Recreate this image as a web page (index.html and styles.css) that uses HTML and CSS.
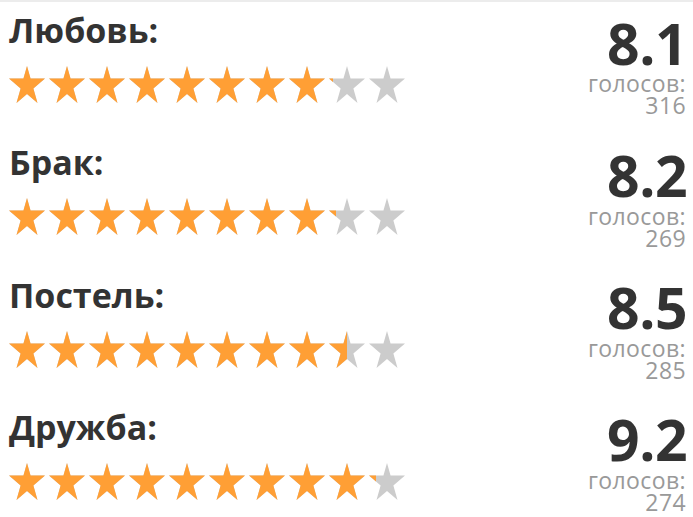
FILE: index.html
```html
<!DOCTYPE html>
<html lang="ru">
<head>
<meta charset="utf-8">
<link rel="stylesheet" href="styles.css">
</head>
<body>
<svg class="defs" width="0" height="0">
  <defs>
    <polygon id="star" points="18,0 21.55,12.5 36,12.5 24.38,22.49 28.5,37 18,27.97 7.5,37 11.62,22.49 0,12.5 14.45,12.5"/>
  </defs>
</svg>
<div class="topbar"></div>
<main class="list">
  <section class="row">
    <div class="left">
      <h2 class="label">Любовь:</h2>
      <div class="stars">
        <div class="layer gray"><svg viewBox="0 0 36 37"><use href="#star"/></svg><svg viewBox="0 0 36 37"><use href="#star"/></svg><svg viewBox="0 0 36 37"><use href="#star"/></svg><svg viewBox="0 0 36 37"><use href="#star"/></svg><svg viewBox="0 0 36 37"><use href="#star"/></svg><svg viewBox="0 0 36 37"><use href="#star"/></svg><svg viewBox="0 0 36 37"><use href="#star"/></svg><svg viewBox="0 0 36 37"><use href="#star"/></svg><svg viewBox="0 0 36 37"><use href="#star"/></svg><svg viewBox="0 0 36 37"><use href="#star"/></svg></div>
        <div class="layer fill" style="width:323.6px"><svg viewBox="0 0 36 37"><use href="#star"/></svg><svg viewBox="0 0 36 37"><use href="#star"/></svg><svg viewBox="0 0 36 37"><use href="#star"/></svg><svg viewBox="0 0 36 37"><use href="#star"/></svg><svg viewBox="0 0 36 37"><use href="#star"/></svg><svg viewBox="0 0 36 37"><use href="#star"/></svg><svg viewBox="0 0 36 37"><use href="#star"/></svg><svg viewBox="0 0 36 37"><use href="#star"/></svg><svg viewBox="0 0 36 37"><use href="#star"/></svg><svg viewBox="0 0 36 37"><use href="#star"/></svg></div>
      </div>
    </div>
    <div class="right">
      <div class="score">8.1</div>
      <div class="votes"><span class="vline">голосов:</span><span class="vline">316</span></div>
    </div>
  </section>
  <section class="row">
    <div class="left">
      <h2 class="label">Брак:</h2>
      <div class="stars">
        <div class="layer gray"><svg viewBox="0 0 36 37"><use href="#star"/></svg><svg viewBox="0 0 36 37"><use href="#star"/></svg><svg viewBox="0 0 36 37"><use href="#star"/></svg><svg viewBox="0 0 36 37"><use href="#star"/></svg><svg viewBox="0 0 36 37"><use href="#star"/></svg><svg viewBox="0 0 36 37"><use href="#star"/></svg><svg viewBox="0 0 36 37"><use href="#star"/></svg><svg viewBox="0 0 36 37"><use href="#star"/></svg><svg viewBox="0 0 36 37"><use href="#star"/></svg><svg viewBox="0 0 36 37"><use href="#star"/></svg></div>
        <div class="layer fill" style="width:327.2px"><svg viewBox="0 0 36 37"><use href="#star"/></svg><svg viewBox="0 0 36 37"><use href="#star"/></svg><svg viewBox="0 0 36 37"><use href="#star"/></svg><svg viewBox="0 0 36 37"><use href="#star"/></svg><svg viewBox="0 0 36 37"><use href="#star"/></svg><svg viewBox="0 0 36 37"><use href="#star"/></svg><svg viewBox="0 0 36 37"><use href="#star"/></svg><svg viewBox="0 0 36 37"><use href="#star"/></svg><svg viewBox="0 0 36 37"><use href="#star"/></svg><svg viewBox="0 0 36 37"><use href="#star"/></svg></div>
      </div>
    </div>
    <div class="right">
      <div class="score">8.2</div>
      <div class="votes"><span class="vline">голосов:</span><span class="vline">269</span></div>
    </div>
  </section>
  <section class="row">
    <div class="left">
      <h2 class="label">Постель:</h2>
      <div class="stars">
        <div class="layer gray"><svg viewBox="0 0 36 37"><use href="#star"/></svg><svg viewBox="0 0 36 37"><use href="#star"/></svg><svg viewBox="0 0 36 37"><use href="#star"/></svg><svg viewBox="0 0 36 37"><use href="#star"/></svg><svg viewBox="0 0 36 37"><use href="#star"/></svg><svg viewBox="0 0 36 37"><use href="#star"/></svg><svg viewBox="0 0 36 37"><use href="#star"/></svg><svg viewBox="0 0 36 37"><use href="#star"/></svg><svg viewBox="0 0 36 37"><use href="#star"/></svg><svg viewBox="0 0 36 37"><use href="#star"/></svg></div>
        <div class="layer fill" style="width:338px"><svg viewBox="0 0 36 37"><use href="#star"/></svg><svg viewBox="0 0 36 37"><use href="#star"/></svg><svg viewBox="0 0 36 37"><use href="#star"/></svg><svg viewBox="0 0 36 37"><use href="#star"/></svg><svg viewBox="0 0 36 37"><use href="#star"/></svg><svg viewBox="0 0 36 37"><use href="#star"/></svg><svg viewBox="0 0 36 37"><use href="#star"/></svg><svg viewBox="0 0 36 37"><use href="#star"/></svg><svg viewBox="0 0 36 37"><use href="#star"/></svg><svg viewBox="0 0 36 37"><use href="#star"/></svg></div>
      </div>
    </div>
    <div class="right">
      <div class="score">8.5</div>
      <div class="votes"><span class="vline">голосов:</span><span class="vline">285</span></div>
    </div>
  </section>
  <section class="row">
    <div class="left">
      <h2 class="label">Дружба:</h2>
      <div class="stars">
        <div class="layer gray"><svg viewBox="0 0 36 37"><use href="#star"/></svg><svg viewBox="0 0 36 37"><use href="#star"/></svg><svg viewBox="0 0 36 37"><use href="#star"/></svg><svg viewBox="0 0 36 37"><use href="#star"/></svg><svg viewBox="0 0 36 37"><use href="#star"/></svg><svg viewBox="0 0 36 37"><use href="#star"/></svg><svg viewBox="0 0 36 37"><use href="#star"/></svg><svg viewBox="0 0 36 37"><use href="#star"/></svg><svg viewBox="0 0 36 37"><use href="#star"/></svg><svg viewBox="0 0 36 37"><use href="#star"/></svg></div>
        <div class="layer fill" style="width:367.2px"><svg viewBox="0 0 36 37"><use href="#star"/></svg><svg viewBox="0 0 36 37"><use href="#star"/></svg><svg viewBox="0 0 36 37"><use href="#star"/></svg><svg viewBox="0 0 36 37"><use href="#star"/></svg><svg viewBox="0 0 36 37"><use href="#star"/></svg><svg viewBox="0 0 36 37"><use href="#star"/></svg><svg viewBox="0 0 36 37"><use href="#star"/></svg><svg viewBox="0 0 36 37"><use href="#star"/></svg><svg viewBox="0 0 36 37"><use href="#star"/></svg><svg viewBox="0 0 36 37"><use href="#star"/></svg></div>
      </div>
    </div>
    <div class="right">
      <div class="score">9.2</div>
      <div class="votes"><span class="vline">голосов:</span><span class="vline">274</span></div>
    </div>
  </section>
</main>
</body>
</html>
```
FILE: styles.css
```css
html, body {
  margin: 0;
  padding: 0;
  background: #ffffff;
}
body {
  font-family: "Open Sans", "Noto Sans", sans-serif;
  width: 693px;
  height: 517px;
  overflow: hidden;
}
.defs {
  position: absolute;
  width: 0;
  height: 0;
}
.topbar {
  height: 2px;
  background: #ececec;
}
.list {
  display: flex;
  flex-direction: column;
}
.row {
  display: flex;
  justify-content: space-between;
  height: 132.3px;
  padding: 8px 6px 0 9px;
  box-sizing: border-box;
}
.left {
  display: flex;
  flex-direction: column;
}
.label {
  margin: 0;
  font-size: 34px;
  line-height: 40px;
  font-weight: 700;
  color: #333333;
}
.stars {
  position: relative;
  margin-top: 16px;
  width: 396px;
  height: 37px;
}
.layer {
  display: flex;
  gap: 4px;
  height: 37px;
}
.layer svg {
  flex: none;
  width: 36px;
  height: 37px;
}
.gray {
  fill: #cccccc;
}
.fill {
  position: absolute;
  left: 0;
  top: 0;
  overflow: hidden;
  fill: #ff9f35;
}
.right {
  display: flex;
  flex-direction: column;
  align-items: flex-end;
  text-align: right;
}
.score {
  font-size: 57px;
  line-height: 56px;
  font-weight: 700;
  color: #333333;
  margin-top: 4.6px;
  letter-spacing: -0.5px;
}
.votes {
  display: flex;
  flex-direction: column;
  align-items: flex-end;
  font-size: 23px;
  letter-spacing: 0.4px;
  color: #999999;
  margin-top: 1.8px;
  margin-right: 1px;
}
.vline {
  display: block;
  height: 22px;
  line-height: 22px;
}
```
